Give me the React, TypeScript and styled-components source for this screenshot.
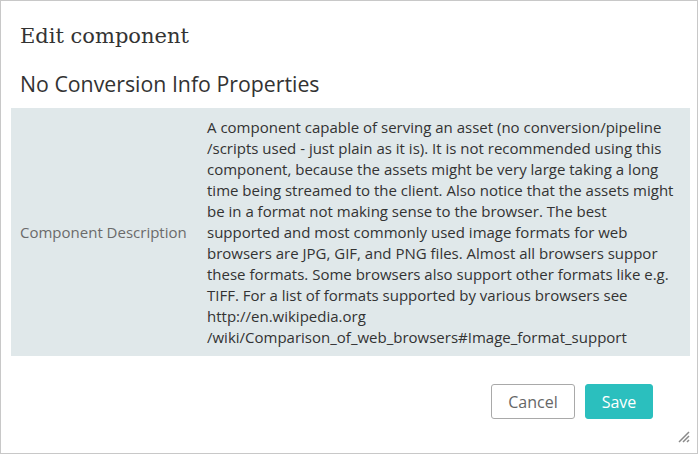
import React from "react";
import styled, { createGlobalStyle } from "styled-components";

const GlobalStyle = createGlobalStyle`
  html, body {
    margin: 0;
    padding: 0;
    background: #ffffff;
  }
  body {
    font-family: "Open Sans", Lato, sans-serif;
    color: #333;
  }
`;

const Dialog = styled.div`
  box-sizing: border-box;
  width: 698px;
  height: 454px;
  border: 1px solid #c8c8c8;
  background: #fff;
  position: relative;
  display: flex;
  flex-direction: column;
`;

const Title = styled.h1`
  margin: 0;
  padding: 19px 19px 0;
  font-family: "DejaVu Serif", serif;
  font-weight: 400;
  font-size: 21px;
  line-height: 32px;
  color: #333;
`;

const Body = styled.div`
  padding: 0 7px 0 10px;
`;

const Subtitle = styled.h2`
  margin: 0;
  padding: 19px 9px 11px;
  font-weight: 400;
  font-size: 21.3px;
  line-height: 26px;
  color: #333;
`;

const PropTable = styled.table`
  width: 100%;
  table-layout: fixed;
  border-collapse: collapse;
  background: #e0e8ea;
`;

const LabelCol = styled.col`
  width: 187px;
`;

const LabelCell = styled.td`
  padding: 9px 9px 8px;
  vertical-align: middle;
  font-size: 15px;
  line-height: 21px;
  color: #6b6b6b;
  white-space: nowrap;
`;

const ValueCell = styled.td`
  padding: 9px 9px 8px;
  font-size: 15px;
  line-height: 21px;
  color: #333;
`;

const Footer = styled.div`
  display: flex;
  justify-content: flex-end;
  gap: 10px;
  padding: 28px 44px 0 0;
`;

const Button = styled.button<{ $primary?: boolean }>`
  box-sizing: border-box;
  height: 35px;
  padding: 0;
  border-radius: 3px;
  font-family: "Open Sans", Lato, sans-serif;
  font-size: 16px;
  cursor: pointer;
  border: 1px solid ${(p) => (p.$primary ? "#2bbfbe" : "#a9a9a9")};
  background: ${(p) => (p.$primary ? "#2bbfbe" : "#fff")};
  color: ${(p) => (p.$primary ? "#fff" : "#666")};
  width: ${(p) => (p.$primary ? "68px" : "84px")};
`;

const Grip = styled.svg`
  position: absolute;
  right: 7px;
  bottom: 10px;
`;

const description =
  "A component capable of serving an asset (no conversion/pipeline /scripts used - just plain as it is). It is not recommended using this component, because the assets might be very large taking a long time being streamed to the client. Also notice that the assets might be in a format not making sense to the browser. The best supported and most commonly used image formats for web browsers are JPG, GIF, and PNG files. Almost all browsers suppor these formats. Some browsers also support other formats like e.g. TIFF. For a list of formats supported by various browsers see http://en.wikipedia.org /wiki/Comparison_of_web_browsers#Image_format_support";

export default function App() {
  return (
    <>
      <GlobalStyle />
      <Dialog>
        <Title>Edit component</Title>
        <Body>
          <Subtitle>No Conversion Info Properties</Subtitle>
          <PropTable>
            <colgroup>
              <LabelCol />
              <col />
            </colgroup>
            <tbody>
              <tr>
                <LabelCell>Component Description</LabelCell>
                <ValueCell>{description}</ValueCell>
              </tr>
            </tbody>
          </PropTable>
        </Body>
        <Footer>
          <Button>Cancel</Button>
          <Button $primary>Save</Button>
        </Footer>
        <Grip width="14" height="14" viewBox="0 0 14 14">
          <path d="M13 3 L3 13 M13 7 L7 13 M13 11 L11 13" stroke="#8a8a8a" strokeWidth="1.5" fill="none" />
        </Grip>
      </Dialog>
    </>
  );
}
